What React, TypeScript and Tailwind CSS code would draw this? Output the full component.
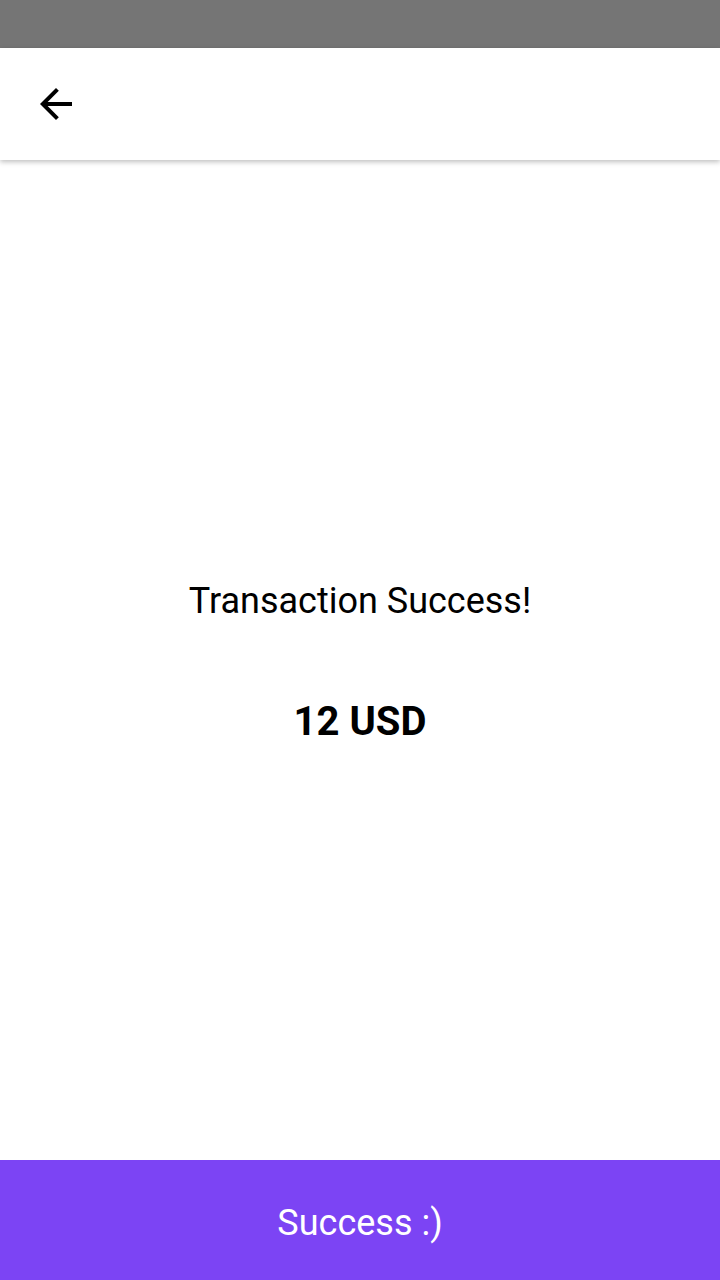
import React from "react";

const BackIcon = () => (
  <svg width="48" height="48" viewBox="0 0 24 24" fill="currentColor">
    <path d="M20 11H7.83l5.59-5.59L12 4l-8 8 8 8 1.41-1.41L7.83 13H20v-2z" />
  </svg>
);

const App: React.FC = () => {
  return (
    <div
      className=" w-[720px] h-[1280px] flex flex-col bg-white"
      style={{ fontFamily: "Roboto, 'Noto Sans', sans-serif" }}
    >
      <div className=" h-[48px] bg-[#757575] shrink-0" />
      <div className=" h-[112px] shrink-0 flex items-center pl-[32px] bg-white shadow-[0_2px_5px_rgba(0,0,0,0.25)] z-10 text-black">
        <BackIcon />
      </div>
      <div className=" flex-1 flex flex-col items-center justify-center gap-[67px] pt-[3px] text-black">
        <p className=" text-[36px] leading-[54px]">Transaction Success!</p>
        <p className=" text-[40px] leading-[54px] font-bold">12 USD</p>
      </div>
      <button className=" h-[120px] shrink-0 w-full pt-[6px] bg-[#7c44f4] text-white text-[36px]">
        Success :)
      </button>
    </div>
  );
};

export default App;
